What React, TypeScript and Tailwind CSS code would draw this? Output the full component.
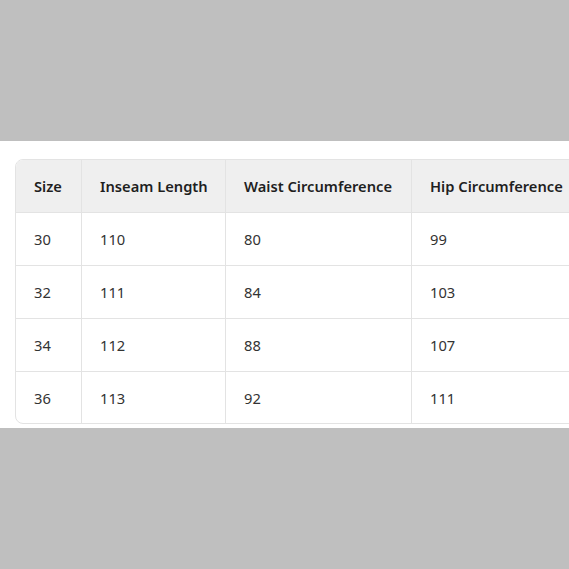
import React from 'react'

type Row = { size: string; inseam: string; waist: string; hip: string }

const rows: Row[] = [
  { size: '30', inseam: '110', waist: '80', hip: '99' },
  { size: '32', inseam: '111', waist: '84', hip: '103' },
  { size: '34', inseam: '112', waist: '88', hip: '107' },
  { size: '36', inseam: '113', waist: '92', hip: '111' },
]

const Cell = ({ children, w, last }: { children: React.ReactNode; w: string; last?: boolean }) => (
  <div className={`${w} shrink-0 flex items-center pl-[18px] pt-[1px] ${last ? '' : 'border-r border-[#e3e3e3]'}`}>
    {children}
  </div>
)

const App = () => {
  return (
    <div
      className="min-h-screen bg-[#bfbfbf] flex items-center"
      style={{ fontFamily: '"Noto Sans", "Open Sans", sans-serif' }}
    >
      <div className="w-full bg-white pt-[18px] pl-[15px] pb-[4px] overflow-hidden">
        <div className="w-[700px] border border-[#e3e3e3] rounded-lg overflow-hidden text-[14.7px]">
          {/* header */}
          <div className="flex h-[53px] bg-[#efefef] border-b border-[#e3e3e3] font-semibold text-[#1f1f1f]">
            <Cell w="w-[66px]">Size</Cell>
            <Cell w="w-[144px]">Inseam Length</Cell>
            <Cell w="w-[186px]">Waist Circumference</Cell>
            <Cell w="flex-1" last>Hip Circumference</Cell>
          </div>
          {rows.map((r, i) => (
            <div
              key={r.size}
              className={`flex text-[#333] ${i < rows.length - 1 ? 'h-[53px] border-b border-[#e3e3e3]' : 'h-[51px]'}`}
            >
              <Cell w="w-[66px]">{r.size}</Cell>
              <Cell w="w-[144px]">{r.inseam}</Cell>
              <Cell w="w-[186px]">{r.waist}</Cell>
              <Cell w="flex-1" last>{r.hip}</Cell>
            </div>
          ))}
        </div>
      </div>
    </div>
  )
}

export default App
